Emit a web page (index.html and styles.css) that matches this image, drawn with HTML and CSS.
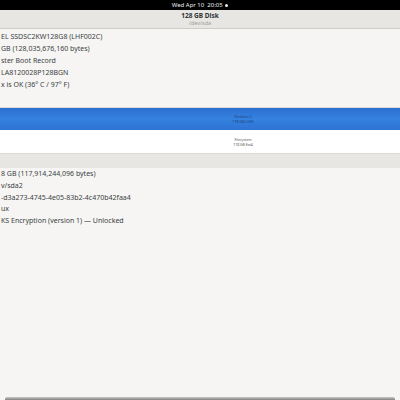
FILE: index.html
```html
<!DOCTYPE html>
<html lang="en">
<head>
    <meta charset="UTF-8">
    <title>128 GB Disk</title>
    <link rel="stylesheet" href="styles.css">
</head>
<body>

<div class="topbar">Wed Apr 10&nbsp; 20:05 <span class="dot"></span></div>

<header class="titlebar">
    <div class="title">128 GB Disk</div>
    <div class="subtitle">/dev/sda</div>
</header>

<div class="window">
    <ul class="info disk-info">
        <li>EL SSDSC2KW128G8 (LHF002C)</li>
        <li>GB (128,035,676,160 bytes)</li>
        <li>ster Boot Record</li>
        <li>LA8120028P128BGN</li>
        <li>x is OK (36° C / 97° F)</li>
    </ul>

    <div class="volumes">
        <div class="volume partition">
            <span>Partition 2</span>
            <span>118 GB LUKS</span>
        </div>
        <div class="volume filesystem">
            <span>Filesystem</span>
            <span>118 GB Ext4</span>
        </div>
    </div>

    <div class="toolbar"></div>

    <ul class="info part-info">
        <li>8 GB (117,914,244,096 bytes)</li>
        <li>v/sda2</li>
        <li>-d3a273-4745-4e05-83b2-4c470b42faa4</li>
        <li>ux</li>
        <li>KS Encryption (version 1) — Unlocked</li>
    </ul>

    <div class="spacer"></div>
    <div class="dock"></div>
</div>

</body>
</html>
```

FILE: styles.css
```css
body {
    margin: 0;
    padding: 0;
    width: 400px;
    height: 400px;
    overflow: hidden;
    font-family: "Noto Sans", "DejaVu Sans", sans-serif;
    color: #2e3436;
    background-color: #f6f5f4;
    display: flex;
    flex-direction: column;
}
.topbar {
    height: 10px;
    background-color: #000;
    color: #eee;
    font-size: 6px;
    line-height: 10px;
    text-align: center;
    flex-shrink: 0;
}
.dot {
    display: inline-block;
    width: 3px;
    height: 3px;
    background-color: #eee;
    border-radius: 50%;
    margin-left: 1px;
    vertical-align: middle;
}
.titlebar {
    height: 18px;
    background-color: #e8e6e3;
    border-bottom: 1px solid #d0ccc7;
    text-align: center;
    flex-shrink: 0;
}
.title {
    font-size: 6.5px;
    font-weight: bold;
    line-height: 9px;
    padding-top: 1px;
}
.subtitle {
    font-size: 5.5px;
    line-height: 7px;
    color: #a0a0a0;
}
.window {
    flex: 1;
    display: flex;
    flex-direction: column;
}
.info {
    list-style: none;
    margin: 0;
    padding: 0 0 0 1px;
    font-size: 7px;
    line-height: 12px;
}
.info li {
    color: #3a3f41;
}
.disk-info {
    padding-top: 2px;
}
.volumes {
    margin-top: 16px;
    border-top: 1px solid #dcdad6;
}
.volume {
    display: flex;
    flex-direction: column;
    align-items: center;
    justify-content: center;
    padding-left: 86px;
    font-size: 3.5px;
    line-height: 5px;
}
.partition {
    height: 22px;
    background: linear-gradient(#2d6fd0, #3482e0 50%, #2e72d4);
    color: #1d3e70;
}
.filesystem {
    height: 23px;
    background-color: #fff;
    color: #555;
}
.toolbar {
    height: 14px;
    background-color: #e8e6e3;
    border-top: 1px solid #dedbd7;
}
.part-info {
    line-height: 11.8px;
}
.spacer {
    flex: 1;
}
.dock {
    height: 3px;
    margin: 0 5px;
    background: linear-gradient(#c8c8c8, #808080);
    border-radius: 2px 2px 0 0;
}
```
